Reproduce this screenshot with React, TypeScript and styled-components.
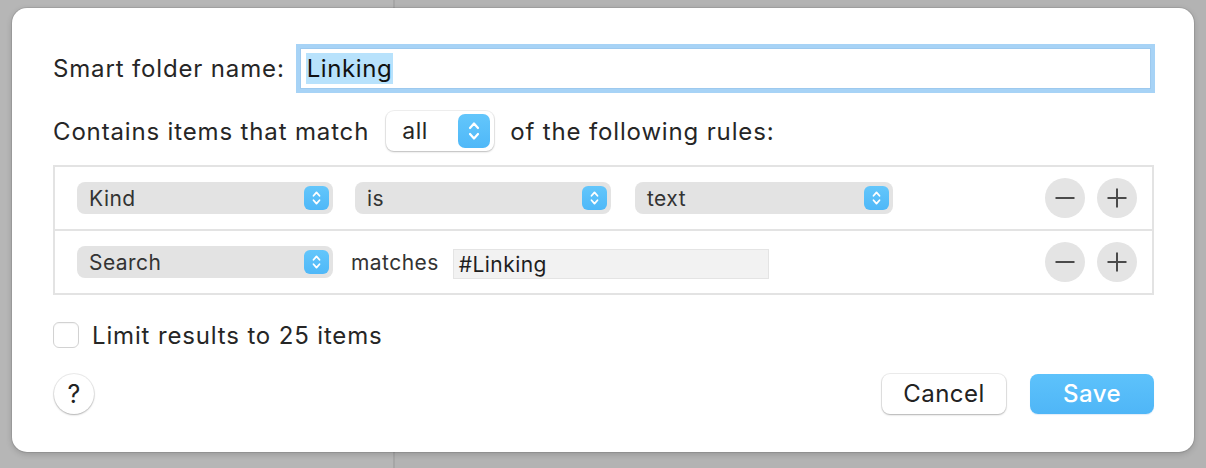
import React from "react";
import styled, { createGlobalStyle } from "styled-components";

const Global = createGlobalStyle`
  html, body { margin: 0; padding: 0; }
  body {
    width: 1206px; height: 468px; overflow: hidden;
    background: #b4b4b4;
    font-family: Inter, "Noto Sans", "Liberation Sans", sans-serif;
    color: #262626;
  }
`;

const Backdrop = styled.div`
  position: relative;
  width: 1206px;
  height: 468px;
  box-sizing: border-box;
  padding: 8px 12px 16px 12px;
  background: linear-gradient(90deg, #b6b6b6 0 393px, #a6a6a6 393px 395px, #b3b3b3 395px 100%);
`;

const Dialog = styled.div`
  position: relative;
  box-sizing: border-box;
  width: 1182px;
  height: 444px;
  background: #fff;
  border-radius: 15px;
  box-shadow: 0 0 0 1px rgba(0,0,0,0.08), 0 2px 6px rgba(0,0,0,0.18);
  padding: 36px 40px 0 41px;
  display: flex;
  flex-direction: column;
`;

const Label = styled.span`
  font-size: 24px;
  color: #262626;
  white-space: nowrap;
  letter-spacing: 0.85px;
`;

const NameRow = styled.div`
  display: flex;
  align-items: center;
  height: 49px;
  gap: 11px;
`;

const NameField = styled.div`
  flex: 1;
  height: 41px;
  box-sizing: border-box;
  border: 1px solid #9dc9ee;
  box-shadow: 0 0 0 4px #a7d3f6;
  display: flex;
  align-items: center;
  padding-left: 5px;
  margin-left: 4px;
  margin-right: 3px;
`;

const Selected = styled.span`
  background: #b8e2fc;
  font-size: 24px;
  letter-spacing: 0.6px;
  color: #111;
  line-height: 31px;
  padding: 0 1px;
`;

const MatchRow = styled.div`
  display: flex;
  align-items: center;
  margin-top: 18px;
  height: 40px;
`;

const AllPopup = styled.div`
  margin-left: 17px;
  margin-right: 16px;
  width: 108px;
  height: 40px;
  box-sizing: border-box;
  border-radius: 8px;
  background: #fff;
  box-shadow: 0 0 0 1px rgba(0,0,0,0.06), 0 1px 2px rgba(0,0,0,0.22);
  display: flex;
  align-items: center;
  justify-content: space-between;
  padding: 0 4px 0 16px;
  font-size: 23px;
  letter-spacing: 0.5px;
`;

const Stepper = styled.div<{ $big?: boolean }>`
  width: ${p => (p.$big ? 32 : 25)}px;
  height: ${p => (p.$big ? 34 : 24)}px;
  border-radius: ${p => (p.$big ? 7 : 6)}px;
  background: linear-gradient(#63c6fb, #4fb8f8);
  display: flex;
  align-items: center;
  justify-content: center;
`;

const RulesBox = styled.div`
  margin-top: 14px;
  border: 2px solid #e3e3e3;
  display: flex;
  flex-direction: column;
`;

const RuleRow = styled.div<{ $last?: boolean }>`
  height: 62px;
  display: flex;
  align-items: center;
  padding: 0 15px 0 22px;
  border-bottom: ${p => (p.$last ? "none" : "2px solid #e3e3e3")};
`;

const GrayPopup = styled.div<{ $w: number; $ml?: number }>`
  width: ${p => p.$w}px;
  margin-left: ${p => p.$ml ?? 0}px;
  height: 32px;
  box-sizing: border-box;
  border-radius: 8px;
  background: #e3e3e3;
  display: flex;
  align-items: center;
  justify-content: space-between;
  padding: 0 4px 0 12px;
  font-size: 21px;
  letter-spacing: 0.45px;
  color: #333;
`;

const MatchesText = styled.span`
  font-size: 21px;
  letter-spacing: 0.45px;
  color: #333;
  margin-left: 18px;
`;

const SearchField = styled.div`
  margin-left: 14px;
  width: 316px;
  height: 30px;
  box-sizing: border-box;
  border: 1px solid #e4e4e4;
  background: #f2f2f2;
  display: flex;
  align-items: center;
  padding-left: 5px;
  font-size: 21px;
  letter-spacing: 0.45px;
  color: #1e1e1e;
  margin-top: 4px;
`;

const Spacer = styled.div`
  flex: 1;
`;

const RoundBtn = styled.div<{ $ml?: number }>`
  width: 40px;
  height: 40px;
  border-radius: 50%;
  background: #e4e4e4;
  margin-left: ${p => p.$ml ?? 0}px;
  display: flex;
  align-items: center;
  justify-content: center;
`;

const CheckRow = styled.div`
  display: flex;
  align-items: center;
  margin-top: 26px;
  height: 28px;
  gap: 13px;
`;

const CheckBox = styled.div`
  width: 26px;
  height: 26px;
  box-sizing: border-box;
  border-radius: 6px;
  background: #fff;
  border: 1px solid #d2d2d2;
  box-shadow: inset 0 1px 1px rgba(0,0,0,0.04);
`;

const Footer = styled.div`
  display: flex;
  align-items: center;
  margin-top: 24px;
  height: 41px;
`;

const HelpBtn = styled.div`
  width: 40px;
  height: 40px;
  border-radius: 50%;
  background: #fff;
  box-shadow: 0 0 0 1px rgba(0,0,0,0.07), 0 1px 2px rgba(0,0,0,0.25);
  display: flex;
  align-items: center;
  justify-content: center;
  font-size: 25px;
  color: #222;
  margin-left: 1px;
`;

const PushBtn = styled.div<{ $primary?: boolean }>`
  width: 124px;
  height: 40px;
  box-sizing: border-box;
  border-radius: 8px;
  display: flex;
  align-items: center;
  justify-content: center;
  font-size: 24px;
  letter-spacing: 0.5px;
  font-weight: ${p => (p.$primary ? 500 : 400)};
  background: ${p => (p.$primary ? "linear-gradient(#5dc2fb, #4fb6f7)" : "#fff")};
  color: ${p => (p.$primary ? "#fff" : "#222")};
  box-shadow: ${p =>
    p.$primary
      ? "0 1px 1px rgba(0,100,200,0.12)"
      : "0 0 0 1px rgba(0,0,0,0.07), 0 1px 2px rgba(0,0,0,0.25)"};
  margin-left: ${p => (p.$primary ? 24 : 0)}px;
`;

const Chevrons = ({ big }: { big?: boolean }) => (
  <svg width={big ? 14 : 11} height={big ? 24 : 18} viewBox="0 0 14 24" fill="none">
    <path d="M3 9 L7 4.5 L11 9" stroke="#fff" strokeWidth={big ? 2.2 : 2.4} strokeLinecap="round" strokeLinejoin="round" />
    <path d="M3 15 L7 19.5 L11 15" stroke="#fff" strokeWidth={big ? 2.2 : 2.4} strokeLinecap="round" strokeLinejoin="round" />
  </svg>
);

const Minus = () => (
  <svg width="22" height="22" viewBox="0 0 22 22">
    <path d="M1.5 11 H20.5" stroke="#4a4a4a" strokeWidth="2" />
  </svg>
);

const Plus = () => (
  <svg width="22" height="22" viewBox="0 0 22 22">
    <path d="M1.5 11 H20.5 M11 1.5 V20.5" stroke="#4a4a4a" strokeWidth="2" />
  </svg>
);

export default function App() {
  return (
    <>
      <Global />
      <Backdrop>
        <Dialog>
          <NameRow>
            <Label>Smart folder name:</Label>
            <NameField>
              <Selected>Linking</Selected>
            </NameField>
          </NameRow>
          <MatchRow>
            <Label>Contains items that match</Label>
            <AllPopup>
              <span>all</span>
              <Stepper $big>
                <Chevrons big />
              </Stepper>
            </AllPopup>
            <Label>of the following rules:</Label>
          </MatchRow>
          <RulesBox>
            <RuleRow>
              <GrayPopup $w={256}>
                <span>Kind</span>
                <Stepper><Chevrons /></Stepper>
              </GrayPopup>
              <GrayPopup $w={256} $ml={22}>
                <span>is</span>
                <Stepper><Chevrons /></Stepper>
              </GrayPopup>
              <GrayPopup $w={258} $ml={24}>
                <span>text</span>
                <Stepper><Chevrons /></Stepper>
              </GrayPopup>
              <Spacer />
              <RoundBtn><Minus /></RoundBtn>
              <RoundBtn $ml={12}><Plus /></RoundBtn>
            </RuleRow>
            <RuleRow $last>
              <GrayPopup $w={256}>
                <span>Search</span>
                <Stepper><Chevrons /></Stepper>
              </GrayPopup>
              <MatchesText>matches</MatchesText>
              <SearchField>#Linking</SearchField>
              <Spacer />
              <RoundBtn><Minus /></RoundBtn>
              <RoundBtn $ml={12}><Plus /></RoundBtn>
            </RuleRow>
          </RulesBox>
          <CheckRow>
            <CheckBox />
            <Label>Limit results to 25 items</Label>
          </CheckRow>
          <Footer>
            <HelpBtn>?</HelpBtn>
            <Spacer />
            <PushBtn>Cancel</PushBtn>
            <PushBtn $primary>Save</PushBtn>
          </Footer>
        </Dialog>
      </Backdrop>
    </>
  );
}
